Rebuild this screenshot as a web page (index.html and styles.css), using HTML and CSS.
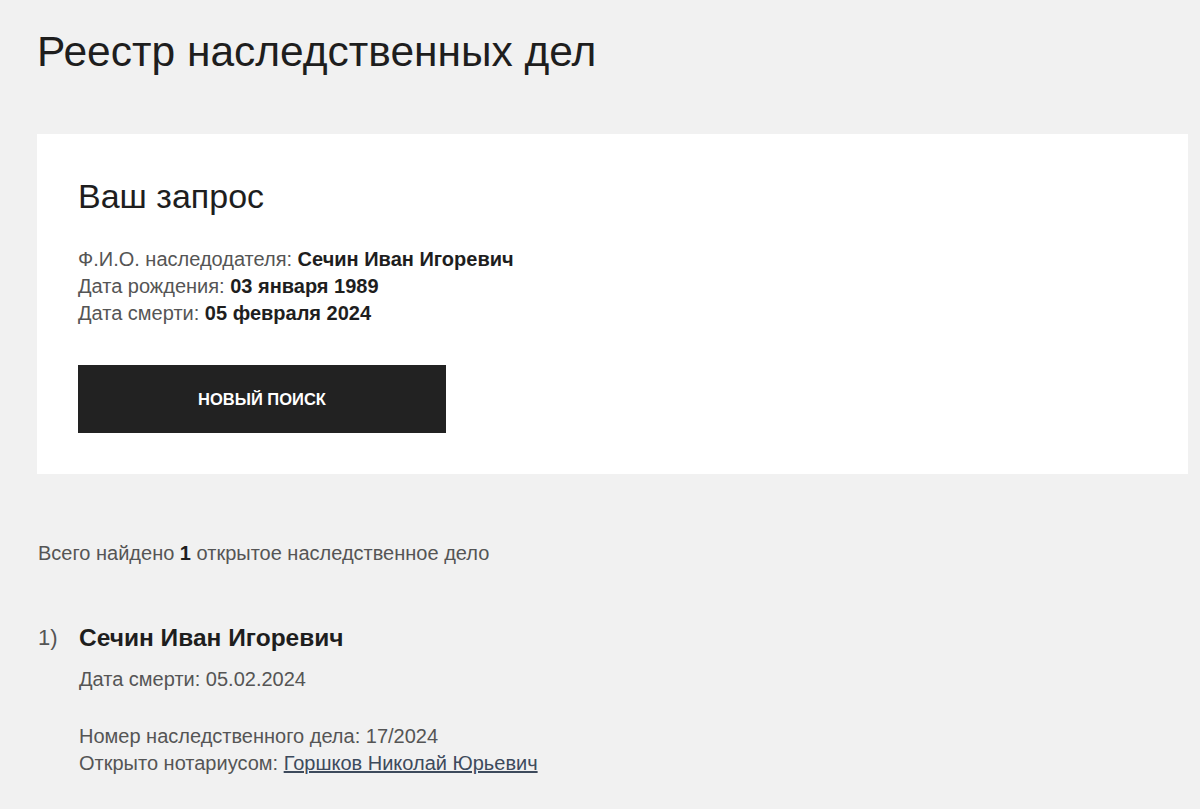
FILE: index.html
```html
<!DOCTYPE html>
<html lang="ru">
<head>
<meta charset="utf-8">
<title>Реестр наследственных дел</title>
<link rel="stylesheet" href="styles.css">
</head>
<body>
<main class="page">
  <h1 class="title">Реестр наследственных дел</h1>
  <section class="card">
    <h2 class="card-title">Ваш запрос</h2>
    <div class="query">
      <div>Ф.И.О. наследодателя: <b>Сечин Иван Игоревич</b></div>
      <div>Дата рождения: <b>03 января 1989</b></div>
      <div>Дата смерти: <b>05 февраля 2024</b></div>
    </div>
    <button class="btn">НОВЫЙ ПОИСК</button>
  </section>
  <p class="total">Всего найдено <b>1</b> открытое наследственное дело</p>
  <ol class="results">
    <li class="result">
      <span class="num">1)</span>
      <div class="body">
        <div class="name">Сечин Иван Игоревич</div>
        <div class="death">Дата смерти: 05.02.2024</div>
        <div class="info">
          <div>Номер наследственного дела: 17/2024</div>
          <div>Открыто нотариусом: <a href="#" class="link">Горшков Николай Юрьевич</a></div>
        </div>
      </div>
    </li>
  </ol>
</main>
</body>
</html>
```
FILE: styles.css
```css
html, body {
  margin: 0;
  padding: 0;
  background: #f1f1f1;
}
body {
  font-family: "Liberation Sans", Arial, sans-serif;
  color: #555;
}
.page {
  padding: 28px 12px 0 37px;
}
.title {
  margin: 0;
  font-size: 42.5px;
  font-weight: normal;
  color: #1e1e1e;
  line-height: 48px;
}
.card {
  margin-top: 58px;
  background: #fff;
  padding: 42px 41px 41px 41px;
}
.card-title {
  margin: 0;
  font-size: 34px;
  font-weight: normal;
  color: #1e1e1e;
  line-height: 40px;
}
.query {
  margin-top: 30px;
  font-size: 20px;
  line-height: 27px;
}
.query b {
  color: #1e1e1e;
}
.btn {
  margin-top: 38px;
  width: 368px;
  height: 68px;
  background: #222;
  color: #fff;
  border: 0;
  font-family: "Liberation Sans", Arial, sans-serif;
  font-weight: bold;
  font-size: 16.5px;
  display: block;
}
.total {
  margin: 67px 0 0 1px;
  font-size: 20px;
  line-height: 24px;
}
.total b {
  color: #1e1e1e;
}
.results {
  list-style: none;
  margin: 58px 0 0;
  padding: 0;
}
.result {
  display: flex;
}
.num {
  width: 41px;
  font-size: 22px;
  line-height: 30px;
  padding-left: 1px;
}
.name {
  font-size: 24.5px;
  font-weight: bold;
  color: #1e1e1e;
  line-height: 30px;
}
.death {
  margin-top: 14px;
  font-size: 20px;
  line-height: 24px;
}
.info {
  margin-top: 32px;
  font-size: 20px;
  line-height: 27px;
}
.link {
  color: #3d4a5c;
  text-decoration: underline;
}
```
